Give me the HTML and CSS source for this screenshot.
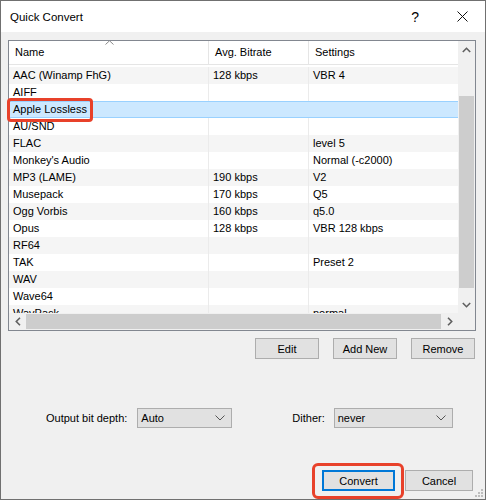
FILE: index.html
```html
<!DOCTYPE html>
<html lang="en">
<head>
<meta charset="UTF-8">
<title>Quick Convert</title>
<link rel="stylesheet" href="styles.css">
</head>
<body>
<div class="window">
  <div class="titlebar">
    <span class="title">Quick Convert</span>
    <span class="help">?</span>
    <svg class="close" width="11" height="11" viewBox="0 0 11 11"><path d="M0.5 0.5 L10.5 10.5 M10.5 0.5 L0.5 10.5" stroke="#111" stroke-width="1" fill="none"/></svg>
  </div>

  <div class="content">
    <div class="listbox">
      <div class="list-view">
        <div class="list-head">
          <div class="cell col-name">Name</div>
          <div class="cell col-rate">Avg. Bitrate</div>
          <div class="cell col-set">Settings</div>
          <svg class="sort-caret" width="9" height="5" viewBox="0 0 9 5"><path d="M0.5 4.5 L4.5 0.8 L8.5 4.5" stroke="#8a8a8a" fill="none"/></svg>
        </div>
        <div class="rows">
          <div class="row alt"><div class="cell col-name">AAC (Winamp FhG)</div><div class="cell col-rate">128 kbps</div><div class="cell col-set">VBR 4</div></div>
          <div class="row"><div class="cell col-name">AIFF</div><div class="cell col-rate"></div><div class="cell col-set"></div></div>
          <div class="row selected"><div class="cell col-name">Apple Lossless</div><div class="cell col-rate"></div><div class="cell col-set"></div></div>
          <div class="row"><div class="cell col-name">AU/SND</div><div class="cell col-rate"></div><div class="cell col-set"></div></div>
          <div class="row alt"><div class="cell col-name">FLAC</div><div class="cell col-rate"></div><div class="cell col-set">level 5</div></div>
          <div class="row"><div class="cell col-name">Monkey's Audio</div><div class="cell col-rate"></div><div class="cell col-set">Normal (-c2000)</div></div>
          <div class="row alt"><div class="cell col-name">MP3 (LAME)</div><div class="cell col-rate">190 kbps</div><div class="cell col-set">V2</div></div>
          <div class="row"><div class="cell col-name">Musepack</div><div class="cell col-rate">170 kbps</div><div class="cell col-set">Q5</div></div>
          <div class="row alt"><div class="cell col-name">Ogg Vorbis</div><div class="cell col-rate">160 kbps</div><div class="cell col-set">q5.0</div></div>
          <div class="row"><div class="cell col-name">Opus</div><div class="cell col-rate">128 kbps</div><div class="cell col-set">VBR 128 kbps</div></div>
          <div class="row alt"><div class="cell col-name">RF64</div><div class="cell col-rate"></div><div class="cell col-set"></div></div>
          <div class="row"><div class="cell col-name">TAK</div><div class="cell col-rate"></div><div class="cell col-set">Preset 2</div></div>
          <div class="row alt"><div class="cell col-name">WAV</div><div class="cell col-rate"></div><div class="cell col-set"></div></div>
          <div class="row"><div class="cell col-name">Wave64</div><div class="cell col-rate"></div><div class="cell col-set"></div></div>
          <div class="row alt"><div class="cell col-name">WavPack</div><div class="cell col-rate"></div><div class="cell col-set">normal</div></div>
        </div>
      </div>

      <div class="vscroll">
        <div class="arrow"><svg width="9" height="6" viewBox="0 0 9 6"><path d="M0.8 5 L4.5 1.3 L8.2 5" stroke="#606060" stroke-width="1.6" fill="none"/></svg></div>
        <div class="track"><div class="thumb"></div></div>
        <div class="arrow"><svg width="9" height="6" viewBox="0 0 9 6"><path d="M0.8 1 L4.5 4.7 L8.2 1" stroke="#606060" stroke-width="1.6" fill="none"/></svg></div>
      </div>

      <div class="hscroll">
        <div class="arrow"><svg width="6" height="9" viewBox="0 0 6 9"><path d="M5 0.8 L1.3 4.5 L5 8.2" stroke="#606060" stroke-width="1.6" fill="none"/></svg></div>
        <div class="track"><div class="thumb"></div></div>
        <div class="arrow"><svg width="6" height="9" viewBox="0 0 6 9"><path d="M1 0.8 L4.7 4.5 L1 8.2" stroke="#606060" stroke-width="1.6" fill="none"/></svg></div>
      </div>
      <div class="corner"></div>
    </div>

    <div class="list-buttons">
      <button class="btn">Edit</button>
      <button class="btn">Add New</button>
      <button class="btn">Remove</button>
    </div>

    <div class="options">
      <label class="opt-label">Output bit depth:</label>
      <div class="combo combo-depth"><span>Auto</span><svg width="10" height="6" viewBox="0 0 10 6"><path d="M0.5 0.5 L5 5 L9.5 0.5" stroke="#555" fill="none"/></svg></div>
      <label class="opt-label dither-label">Dither:</label>
      <div class="combo combo-dither"><span>never</span><svg width="10" height="6" viewBox="0 0 10 6"><path d="M0.5 0.5 L5 5 L9.5 0.5" stroke="#555" fill="none"/></svg></div>
    </div>

    <div class="dialog-buttons">
      <button class="btn btn-default">Convert</button>
      <button class="btn btn-cancel">Cancel</button>
    </div>
  </div>

  <!-- red callouts drawn on top of the screenshot -->
  <div class="mark mark-apple"></div>
  <div class="mark mark-convert"></div>

  <svg class="grip" width="8" height="8" viewBox="0 0 8 8">
    <rect x="6" y="0" width="2" height="2" fill="#bdbdbd"/>
    <rect x="3" y="3" width="2" height="2" fill="#bdbdbd"/>
    <rect x="6" y="3" width="2" height="2" fill="#bdbdbd"/>
    <rect x="0" y="6" width="2" height="2" fill="#bdbdbd"/>
    <rect x="3" y="6" width="2" height="2" fill="#bdbdbd"/>
    <rect x="6" y="6" width="2" height="2" fill="#bdbdbd"/>
  </svg>
</div>
</body>
</html>
```

FILE: styles.css
```css
/* Quick Convert dialog */
body {
  margin: 0;
  background: #ffffff;
  font-family: 'Liberation Sans', Arial, sans-serif;
  font-size: 11px;
  color: #000;
}

.window {
  position: relative;
  width: 486px;
  height: 500px;
  box-sizing: border-box;
  border: 1px solid #707070;
  background-color: #f0f0f0;
}

.titlebar {
  height: 31px;
  background: #fff;
  display: flex;
  align-items: center;
  padding-left: 9px;
}

.title {
  font-size: 11.5px;
  flex: 1;
}

.help {
  font-size: 14px;
  margin-right: 38px;
}

.close {
  margin-right: 17px;
}

.content {
  padding: 8px 9px 0 7px;
}

/* list box */
.listbox {
  display: grid;
  grid-template-columns: 449px 17px;
  grid-template-rows: 272px 17px;
  border: 1px solid #828790;
  background: #fff;
  width: 466px;
}

.list-view {
  overflow: hidden;
}

.list-head {
  position: relative;
  display: flex;
  height: 23px;
  border-bottom: 1px solid #e5e5e5;
}

.list-head .cell {
  line-height: 23px;
  padding-left: 6px;
  border-right: 1px solid #e5e5e5;
}

.list-head .col-set {
  border-right: none;
}

.sort-caret {
  position: absolute;
  top: -1px;
  left: 96px;
}

.rows {
  padding-top: 2px;
}

.row {
  display: flex;
  height: 17px;
  box-sizing: border-box;
}

.row.alt {
  background-color: #f5f5f5;
}

.row .cell {
  line-height: 17px;
  padding-left: 4px;
  border-right: 1px solid #ebebeb;
  white-space: nowrap;
  overflow: hidden;
}

.cell {
  box-sizing: border-box;
}

.col-name { width: 200px; }
.col-rate { width: 100px; }
.col-set { width: 149px; border-right: none !important; }

.row.selected {
  background-color: #cce8ff;
  border-top: 1px solid #99d1ff;
  border-bottom: 1px solid #99d1ff;
}

.row.selected .cell {
  line-height: 15px;
  border-right-color: transparent;
}

/* scrollbars */
.vscroll {
  display: flex;
  flex-direction: column;
  background: #f0f0f0;
}

.vscroll .arrow {
  height: 17px;
  display: flex;
  align-items: center;
  justify-content: center;
}

.vscroll .track {
  flex: 1;
}

.vscroll .thumb {
  margin: 38px 1px 0 1px;
  height: 192px;
  background: #cdcdcd;
}

.hscroll {
  display: flex;
  background: #f0f0f0;
}

.hscroll .arrow {
  width: 17px;
  display: flex;
  align-items: center;
  justify-content: center;
}

.hscroll .track {
  flex: 1;
}

.hscroll .thumb {
  margin: 1px 0;
  height: 15px;
  background: #cdcdcd;
}

.corner {
  background: #f0f0f0;
}

/* buttons */
.btn {
  font-family: inherit;
  font-size: 11px;
  color: #000;
  background: #e1e1e1;
  border: 1px solid #adadad;
  height: 21px;
  width: 64px;
  padding: 0;
  box-sizing: border-box;
}

.list-buttons {
  display: flex;
  justify-content: flex-end;
  gap: 14px;
  margin-top: 7px;
  width: 467px;
}

.options {
  display: flex;
  align-items: center;
  margin-top: 49px;
  padding-left: 38px;
}

.opt-label {
  margin-right: 10px;
}

.dither-label {
  margin-left: 60px;
  margin-right: 9px;
}

.combo {
  display: flex;
  align-items: center;
  justify-content: space-between;
  height: 20px;
  box-sizing: border-box;
  background: #e1e1e1;
  border: 1px solid #adadad;
  padding: 0 6px 0 3px;
}

.combo-depth { width: 95px; }
.combo-dither { width: 119px; }

.dialog-buttons {
  display: flex;
  justify-content: flex-end;
  gap: 10px;
  margin-top: 42px;
  margin-right: 3px;
}

.btn-default {
  width: 73px;
  border: 2px solid #0078d7;
}

.btn-cancel {
  width: 68px;
}

.mark {
  position: absolute;
  border: 3px solid #e8412a;
  border-radius: 4px;
  box-sizing: border-box;
}

.mark-apple {
  left: 6px;
  top: 97px;
  width: 86px;
  height: 24px;
}

.mark-convert {
  left: 311px;
  top: 462px;
  width: 92px;
  height: 36px;
  border-radius: 6px;
}

.grip {
  position: absolute;
  right: 2px;
  bottom: 2px;
}
```
